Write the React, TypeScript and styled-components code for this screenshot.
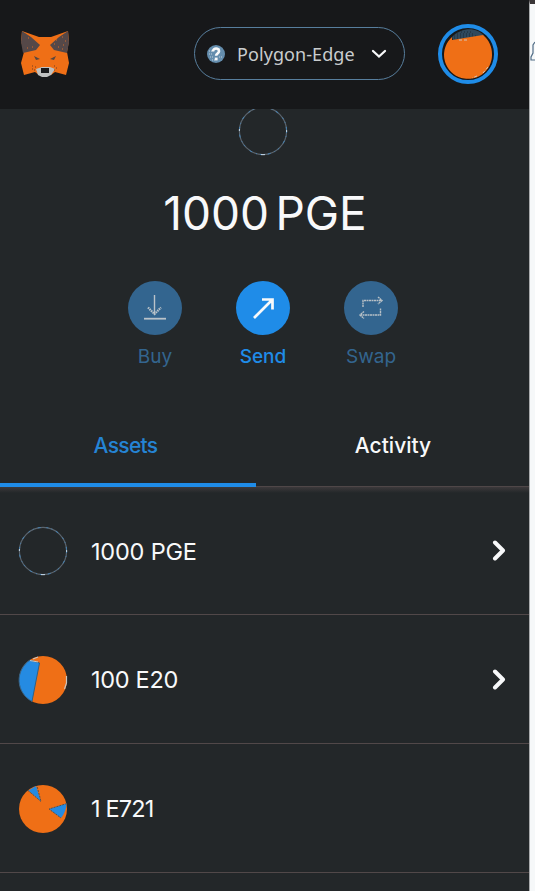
import React from "react";
import styled, { createGlobalStyle } from "styled-components";

const GlobalStyle = createGlobalStyle`
  * { box-sizing: border-box; }
  html, body { margin: 0; background: #232729; overflow: hidden; }
  body { font-family: "Inter", "Liberation Sans", sans-serif; color: #f8f9fa; }
  button { font: inherit; color: inherit; background: none; border: 0; padding: 0; }
  svg { display: block; flex: none; }
`;

const Page = styled.div`
  display: flex;
  width: 535px;
  height: 891px;
  overflow: hidden;
`;

const Wallet = styled.main`
  width: 529px;
  height: 891px;
  background: #232729;
  overflow: hidden;
`;

const Behind = styled.aside`
  width: 6px;
  background: #f6f8f9;
  border-left: 1px solid #a9abad;
  border-top: 4px solid #3b3638;
  padding-top: 36px;
  overflow: hidden;
`;

const Header = styled.header`
  display: flex;
  align-items: flex-start;
  height: 109px;
  padding: 24px 0 0 20px;
  background: #17181a;
`;

const FoxSlot = styled.div`
  width: 174px;
  padding-top: 6px;
`;

const Network = styled.button`
  display: flex;
  align-items: center;
  width: 211px;
  height: 53px;
  margin-top: 3px;
  padding: 0 17px 0 12px;
  border: 1px solid #577e9d;
  border-radius: 27px;
`;

const NetworkName = styled.span`
  flex: 1;
  margin-left: 12px;
  text-align: left;
  font-family: "Noto Sans", sans-serif;
  font-size: 18px;
  letter-spacing: 0.08px;
  line-height: 28px;
  color: #c9ccce;
  white-space: nowrap;
`;

const Account = styled.button`
  display: flex;
  align-items: center;
  justify-content: center;
  width: 60px;
  height: 60px;
  margin-left: 33px;
  border: 4px solid #1f8ce8;
  border-radius: 50%;
`;

const Balance = styled.section`
  display: flex;
  flex-direction: column;
  align-items: center;
  height: 299px;
  padding-right: 3px;
  overflow: hidden;
`;

const TokenSlot = styled.div`
  margin-top: -3px;
`;

const Amount = styled.h1`
  margin: 28px 0 0 4px;
  font-size: 46px;
  font-weight: 400;
  line-height: 58px;
  letter-spacing: 0;
  word-spacing: -6.5px;
  white-space: nowrap;
`;

const Actions = styled.div`
  display: flex;
  margin-top: 39px;
`;

const Action = styled.button<{ $active?: boolean }>`
  display: flex;
  flex-direction: column;
  align-items: center;
  width: 108px;
  color: ${(p) => (p.$active ? "#1f8ce8" : "#33658f")};
`;

const ActionDisc = styled.span`
  display: grid;
  place-items: center;
  width: 54px;
  height: 54px;
  border-radius: 50%;
  background: currentColor;
`;

const ActionLabel = styled.span<{ $strong?: boolean }>`
  margin-top: 8px;
  font-size: 19px;
  font-weight: ${(p) => (p.$strong ? 500 : 400)};
  line-height: 28px;
`;

const Tabs = styled.nav`
  display: flex;
  height: 79px;
`;

const Tab = styled.button<{ $selected?: boolean }>`
  flex: ${(p) => (p.$selected ? "0 0 256px" : "1")};
  height: 79px;
  padding: ${(p) => (p.$selected ? "0 5px 1px 0" : "0 0 3px 1px")};
  border-bottom: ${(p) => (p.$selected ? "4px solid #1f8ce8" : "1px solid #4f4748")};
  font-size: 21px;
  font-weight: 500;
  letter-spacing: ${(p) => (p.$selected ? -0.7 : 0)}px;
  color: ${(p) => (p.$selected ? "#2584d4" : "#f8f9fa")};
`;

const TabShade = styled.div`
  height: 6px;
  margin-bottom: -6px;
  background: linear-gradient(#3c393b, #232729);
`;

const Asset = styled.div`
  display: flex;
  align-items: center;
  height: 129px;
  padding: 1px 22px 0 18px;
  border-bottom: 1px solid #514849;

  &:first-child { height: 128px; }
`;

const AssetName = styled.span<{ $tracking: number }>`
  flex: 1;
  margin-left: 23px;
  padding-top: 1px;
  font-size: 23.5px;
  line-height: 32px;
  letter-spacing: ${(p) => p.$tracking}px;
`;

const Fox = () => (
  <svg width="50" height="48" viewBox="0 0 50 48">
    <path d="M2 1 19 7h12L48 1l1 10-2 11 2 11-3 12-11-3-4 3H19l-4-3-11 3L1 33l3-11L1 11Z" fill="#ef6f16" />
    <path d="M2 1 11 7l9 8-4 5-13 3L1 12ZM48 1l-9 6-9 8 4 5 13 3 2-11Z" fill="#554848" />
    <path d="m14 26 6 3-4 1ZM36 26l-6 3 4 1Z" fill="#59463f" />
    <path d="M8 8h1M12 17h1M7 18h1M36 10h1M42 7h1M38 17h1M43 15h1M34 14h1M45 11h1M42 19h1" stroke="#d66a28" />
    <path d="m16 39 6-2h8l5 2-4 6-4 2h-5l-4-2Z" fill="#bfc1c1" />
    <path d="M21 38h8v5h-8Z" fill="#191a1c" />
    <path d="M12 36h1M15 37h1M12 39h1M14 40h1M34 36h1M36 38h1M34 40h1" stroke="#713e22" />
  </svg>
);

const Question = () => (
  <svg width="18" height="18" viewBox="0 0 18 18">
    <circle cx="9" cy="9" r="9" fill="#648dad" />
    <path d="M2 6h3M2 9h3M3 12h3M12 4h2M12 12h3M5 15h4" stroke="#c3d0da" strokeDasharray="1 1" />
    <path d="M6 6.5C6 2.4 12.4 2.7 12 6.4c-.2 2-2.9 2.2-2.9 4.3" fill="none" stroke="#f8f9fa" strokeWidth="2.6" />
    <path d="M7.8 12.6h2.8v2.8H7.8Z" fill="#f8f9fa" />
  </svg>
);

const ChevronDown = () => (
  <svg width="16" height="10" viewBox="0 0 16 10">
    <path d="m2 2 6 5.5L14 2" fill="none" stroke="#f8f9fa" strokeWidth="2.3" strokeLinecap="round" />
  </svg>
);

const ChevronRight = () => (
  <svg width="15" height="22" viewBox="0 0 15 22">
    <path d="m3 2.5 8 8-8 8" fill="none" stroke="#f8f9fa" strokeWidth="4" strokeLinecap="round" strokeLinejoin="round" />
  </svg>
);

const Avatar = () => (
  <svg width="48" height="50" viewBox="0 0 48 50">
    <path d="M8 8C18-2 33-2 40 7L9 11Z" fill="#30495d" />
    <path d="M10 7h23M13 5h18M17 3h12M10 9h10" stroke="#1d2b37" strokeDasharray="1 2" />
    <path d="M8 8v3l31-5c6 5 9 12 9 19a24 24 0 1 1-40-17Z" fill="#ef6f16" />
    <path d="M15 11h9M44 38l-5 6M33 47l-5 2" stroke="#d5c5b8" strokeDasharray="3 2" />
  </svg>
);

const TokenRing = () => (
  <svg width="50" height="50" viewBox="0 0 50 50">
    <circle cx="25" cy="25" r="23.6" fill="none" stroke="#5b646d" strokeWidth="1.2" />
    <circle cx="25" cy="25" r="23.6" fill="none" stroke="#4585b8" strokeWidth="1" strokeDasharray="2 3 1 4 3 6" />
    <path d="M23 48.6h4M1.4 23v2M48.6 24v2" stroke="#c4d8e8" />
  </svg>
);

const SplitToken = () => (
  <svg width="50" height="50" viewBox="0 0 50 50">
    <circle cx="25" cy="25" r="24" fill="#ef6f16" />
    <path d="M21.5 8 14 46.4A24 24 0 0 1 12 5Z" fill="#258be2" stroke="#306187" />
    <path d="M12 5.5 20 7M20 2l-5 2M48.5 21v7l-2 6" fill="none" stroke="#cbc4be" strokeWidth="1.2" />
  </svg>
);

const WedgeToken = () => (
  <svg width="50" height="50" viewBox="0 0 50 50">
    <circle cx="25" cy="25" r="24" fill="#ef6f16" />
    <path d="M10.5 6.5 18 2l5 15.5Z" fill="#258be2" />
    <path d="M31 25 48.5 19.5a24 24 0 0 1-5.5 14.5Z" fill="#258be2" />
    <path d="m10 6.5 13 11L19 2M49 19.5 31 25l12 9" fill="none" stroke="#5b514c" strokeDasharray="2 1" />
  </svg>
);

const BuyIcon = () => (
  <svg width="24" height="28" viewBox="0 0 24 28" fill="none" stroke="#bac3c9" strokeWidth="1.4">
    <path d="M11.5 1v19" />
    <path d="m5 13.5 6.5 6.5 6.5-6.5" strokeWidth="2.2" strokeDasharray="1.5 .7" />
    <path d="M1 24.7h22" strokeWidth="1.8" />
  </svg>
);

const SendIcon = () => (
  <svg width="24" height="24" viewBox="0 0 24 24" fill="none" stroke="#f8f9fa" strokeWidth="2.7">
    <path d="M3 22 21 4M11 3.5h10.5v10" />
  </svg>
);

const SwapIcon = () => (
  <svg width="26" height="26" viewBox="0 0 26 26" fill="none" stroke="#b7c0c6" strokeWidth="1.4">
    <path d="M5 12V5.5h18.5M20 2l4 3.5-4 3.5M22.5 13.500v6.500H3M6 16.500 2 20l4 3.500" strokeDasharray="2 .5" />
  </svg>
);

const BellEdge = () => (
  <svg width="5" height="24" viewBox="0 0 5 24">
    <path d="M5 2 3 5v8l-2 4v3h4" fill="none" stroke="#516d86" strokeWidth="1.2" />
  </svg>
);

const AssetList = styled.section`
  display: flex;
  flex-direction: column;
`;

const assets = [
  { name: "1000 PGE", icon: <TokenRing />, tracking: -0.2, more: true },
  { name: "100 E20", icon: <SplitToken />, tracking: -0.3, more: true },
  { name: "1 E721", icon: <WedgeToken />, tracking: -0.85, more: false },
];

export default function App() {
  return (
    <>
      <GlobalStyle />
      <Page>
        <Wallet>
          <Header>
            <FoxSlot><Fox /></FoxSlot>
            <Network>
              <Question />
              <NetworkName>Polygon-Edge</NetworkName>
              <ChevronDown />
            </Network>
            <Account><Avatar /></Account>
          </Header>
          <Balance>
            <TokenSlot><TokenRing /></TokenSlot>
            <Amount>1000 PGE</Amount>
            <Actions>
              <Action>
                <ActionDisc><BuyIcon /></ActionDisc>
                <ActionLabel>Buy</ActionLabel>
              </Action>
              <Action $active>
                <ActionDisc><SendIcon /></ActionDisc>
                <ActionLabel $strong>Send</ActionLabel>
              </Action>
              <Action>
                <ActionDisc><SwapIcon /></ActionDisc>
                <ActionLabel>Swap</ActionLabel>
              </Action>
            </Actions>
          </Balance>
          <Tabs>
            <Tab $selected>Assets</Tab>
            <Tab>Activity</Tab>
          </Tabs>
          <TabShade />
          <AssetList>
            {assets.map((asset) => (
              <Asset key={asset.name}>
                {asset.icon}
                <AssetName $tracking={asset.tracking}>{asset.name}</AssetName>
                {asset.more && <ChevronRight />}
              </Asset>
            ))}
          </AssetList>
        </Wallet>
        <Behind><BellEdge /></Behind>
      </Page>
    </>
  );
}
